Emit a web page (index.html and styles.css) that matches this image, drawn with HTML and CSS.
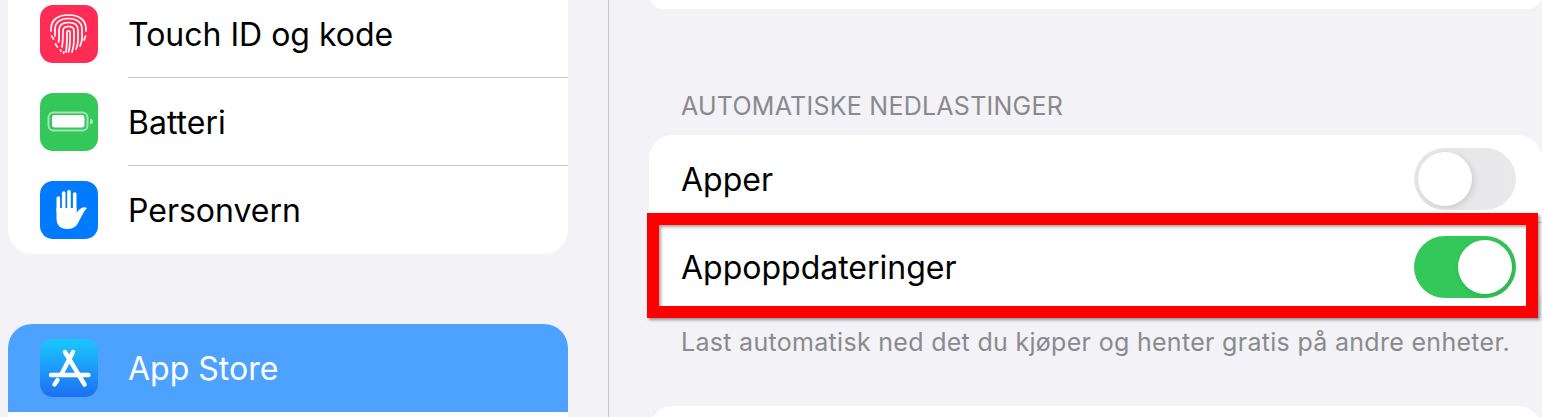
FILE: index.html
```html
<!DOCTYPE html>
<html lang="no">

<head>
    <meta charset="UTF-8">
    <meta name="viewport" content="width=device-width, initial-scale=1.0">
    <title>Innstillinger</title>
    <link rel="stylesheet" href="styles.css">
</head>

<body>
    <div class="main">
        <div class="sidebar">
            <div class="menu-card">
                <div class="menu-row">
                    <div class="app-icon touchid">
                        <svg viewBox="0 0 58 58" fill="none" stroke="#fff" stroke-width="1.700" stroke-linecap="round">
                            <path d="M11 26V24C11 14 19 10 28.500 10C38 10 46 14 46 24V26" />
                            <path d="M11.500 31C12.500 32 13 33 13.500 34M45.500 31C45 33 44.500 34 44 35" />
                            <path d="M15 31V24C15 17 21 13.500 28.500 13.500C36 13.500 42 17 42 24V33C42 36 41 39 40 41" />
                            <path d="M18.500 37C19.500 34 19 29 19 25C19 20 23 17.500 28.500 17.500C34 17.500 38 20 38 25V33C38 37 37.500 41 36 44" />
                            <path d="M15.500 39C16 40 16.500 41 17.500 42M22 42C23 37 23 30 23 26C23 23 25 21.500 28.500 21.500C32 21.500 34 23 34 26V34C34 38 33.500 43 32 47" />
                            <path d="M26 47C27 42 27 31 27 27C27 25.500 30 25.500 30 27C30 32 30.500 41 28.500 47" />
                            <path d="M20.500 45L21 46M24 47L23.500 48" />
                        </svg>
                    </div>
                    <div class="menu-label">Touch ID og kode</div>
                </div>
                <div class="menu-row">
                    <div class="app-icon battery">
                        <svg viewBox="0 0 58 58">
                            <rect x="8.500" y="19.500" width="39" height="18" rx="5" fill="none" stroke="#fff" stroke-opacity="0.55" stroke-width="2" />
                            <rect x="12" y="22" width="32.500" height="12.500" rx="2.500" fill="#fff" />
                            <path d="M50 25.500C52 26 53 27 53 28.500C53 30 52 31 50 31.500Z" fill="#fff" fill-opacity="0.55" />
                        </svg>
                    </div>
                    <div class="menu-label">Batteri</div>
                </div>
                <div class="menu-row">
                    <div class="app-icon privacy">
                        <svg viewBox="0 0 58 58">
                            <path d="M18.300 17V30M23.700 12V29M29 10.500V29M34.700 13V31" stroke="#fff" stroke-width="3.600" stroke-linecap="round" fill="none" />
                            <path d="M16.500 27H36.500V32C39 28 43 25 47 27C43 31 41 37 38 42C36 46 32 48 27 48C20 48 16.500 44 16.500 37Z" fill="#fff" />
                        </svg>
                    </div>
                    <div class="menu-label">Personvern</div>
                </div>
            </div>

            <div class="menu-card store-card">
                <div class="menu-row selected">
                    <div class="app-icon appstore">
                        <svg viewBox="0 0 58 58" fill="none" stroke="#fff" stroke-width="4.400" stroke-linecap="round">
                            <path d="M33 13L21.500 35" />
                            <path d="M25 13L44.500 45.500" />
                            <path d="M11 36H48.500" />
                            <path d="M17.500 41L14.500 45.500" />
                        </svg>
                    </div>
                    <div class="menu-label">App Store</div>
                </div>
            </div>
        </div>

        <div class="detail">
            <div class="panel top-panel"></div>
            <div class="group-title">AUTOMATISKE NEDLASTINGER</div>
            <div class="panel">
                <div class="setting-row">
                    <span>Apper</span>
                    <div class="toggle"><div class="knob"></div></div>
                </div>
                <div class="setting-row">
                    <span>Appoppdateringer</span>
                    <div class="toggle on"><div class="knob"></div></div>
                </div>
            </div>
            <div class="group-note">Last automatisk ned det du kjøper og henter gratis på andre enheter.</div>
            <div class="panel bottom-panel"></div>
            <div class="highlight"></div>
        </div>
    </div>
</body>

</html>
```

FILE: styles.css
```css
body {
    margin: 0;
    height: 417px;
    overflow: hidden;
    background-color: #f2f2f7;
    font-family: "Inter", "Liberation Sans", sans-serif;
    color: #000;
}

.main {
    display: flex;
    height: 417px;
    overflow: hidden;
}

.sidebar {
    width: 609px;
    flex-shrink: 0;
    box-sizing: border-box;
    padding: 0 40px 0 8px;
    border-right: 1px solid #c6c6c8;
}

.menu-card {
    margin-top: -10px;
    background-color: #fff;
    border-radius: 0 0 24px 24px;
}

.store-card {
    margin-top: 70px;
    height: 200px;
    border-radius: 24px;
}

.menu-row {
    display: flex;
    align-items: center;
    height: 88px;
    padding-left: 32px;
}

.selected {
    background-color: #4da2ff;
    color: #fff;
    border-radius: 24px 24px 0 0;
}

.app-icon {
    width: 58px;
    height: 58px;
    flex-shrink: 0;
    border-radius: 13px;
}

.app-icon svg {
    display: block;
    width: 58px;
    height: 58px;
}

.touchid {
    background-color: #ff2d55;
}

.battery {
    background-color: #34c759;
}

.privacy {
    background-color: #007aff;
}

.appstore {
    background: linear-gradient(#1bc8fe, #1d6ff2);
}

.menu-label {
    flex: 1;
    align-self: stretch;
    display: flex;
    align-items: center;
    box-sizing: border-box;
    margin-left: 30px;
    padding-top: 1px;
    font-size: 32px;
    border-bottom: 1px solid #c6c6c8;
}

.menu-row:last-child .menu-label {
    border-bottom: none;
}

.detail {
    flex: 1;
    position: relative;
    padding-left: 40px;
}

.panel {
    background-color: #fff;
    border-radius: 24px;
}

.top-panel {
    height: 29px;
    margin-top: -20px;
}

.group-title {
    margin: 81px 0 13px 32px;
    height: 32px;
    line-height: 32px;
    font-size: 25px;
    letter-spacing: 0.25px;
    color: #8a8a8e;
}

.setting-row {
    display: flex;
    justify-content: space-between;
    align-items: center;
    height: 88px;
    padding: 0 26px 0 32px;
    font-size: 32px;
}

.setting-row:first-child {
    box-shadow: inset 0 -1px 0 #c6c6c8;
}

.group-note {
    margin: 15px 0 0 32px;
    height: 32px;
    line-height: 32px;
    font-size: 25px;
    letter-spacing: 0.3px;
    color: #8a8a8e;
}

.bottom-panel {
    height: 60px;
    margin-top: 48px;
}

.toggle {
    width: 102px;
    height: 62px;
    box-sizing: border-box;
    padding: 4px;
    border-radius: 31px;
    background: linear-gradient(90deg, #e6e6e8, #e9e9eb);
}

.toggle.on {
    display: flex;
    justify-content: flex-end;
    background: #34c759;
}

.knob {
    width: 54px;
    height: 54px;
    border-radius: 50%;
    background-color: #fff;
    box-shadow: 2px 2px 6px rgba(0, 0, 0, 0.12);
}

/* red box drawn on top of the screenshot */
.highlight {
    position: absolute;
    left: 38px;
    top: 213px;
    width: 867px;
    height: 81px;
    border: 12px solid #f00;
    box-shadow: 2px 2px 3px rgba(0, 0, 0, 0.4), inset 2px 2px 3px rgba(0, 0, 0, 0.35);
}
```
